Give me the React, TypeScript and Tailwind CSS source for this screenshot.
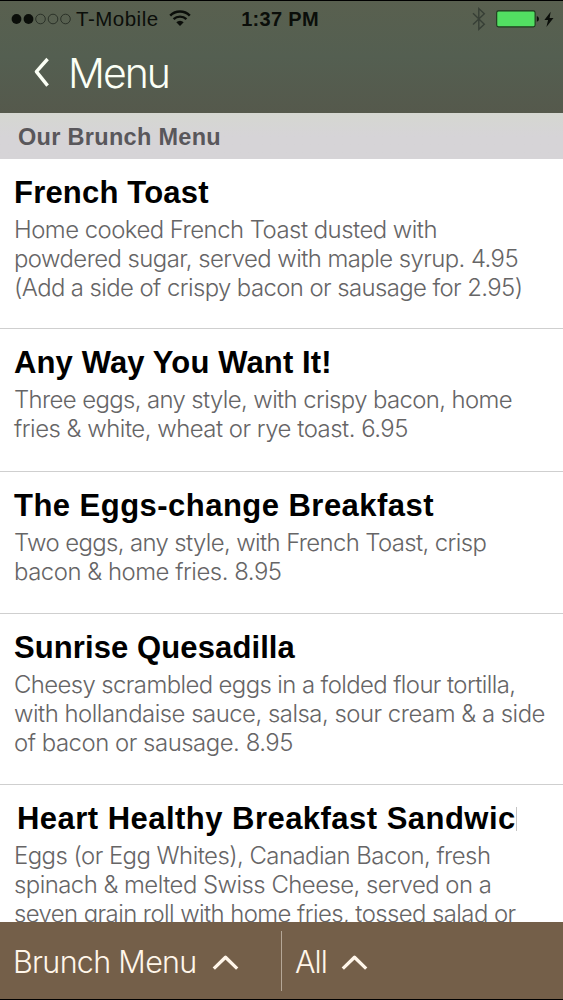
import clsx from "clsx";

type Line = { text: string; tracking: string };
type MenuItem = {
  title: string;
  titleClass: string;
  height: string;
  cut?: boolean;
  lines: Line[];
};

const items: MenuItem[] = [
  {
    title: "French Toast",
    titleClass: "tracking-[0.2px]",
    height: "h-[170px]",
    lines: [
      { text: "Home cooked French Toast dusted with", tracking: "tracking-[-0.51px]" },
      { text: "powdered sugar, served with maple syrup. 4.95", tracking: "tracking-[-0.55px]" },
      { text: "(Add a side of crispy bacon or sausage for 2.95)", tracking: "tracking-[-0.58px]" },
    ],
  },
  {
    title: "Any Way You Want It!",
    titleClass: "tracking-[0.13px]",
    height: "h-[143px]",
    lines: [
      { text: "Three eggs, any style, with crispy bacon, home", tracking: "tracking-[-0.61px]" },
      { text: "fries & white, wheat or rye toast. 6.95", tracking: "tracking-[-0.49px]" },
    ],
  },
  {
    title: "The Eggs-change Breakfast",
    titleClass: "tracking-[0.47px]",
    height: "h-[142px]",
    lines: [
      { text: "Two eggs, any style, with French Toast, crisp", tracking: "tracking-[-0.61px]" },
      { text: "bacon & home fries. 8.95", tracking: "tracking-[-0.47px]" },
    ],
  },
  {
    title: "Sunrise Quesadilla",
    titleClass: "tracking-[0.1px]",
    height: "h-[171px]",
    lines: [
      { text: "Cheesy scrambled eggs in a folded flour tortilla,", tracking: "tracking-[-0.59px]" },
      { text: "with hollandaise sauce, salsa, sour cream & a side", tracking: "tracking-[-0.49px]" },
      { text: "of bacon or sausage. 8.95", tracking: "tracking-[-0.46px]" },
    ],
  },
  {
    title: "Heart Healthy Breakfast Sandwic",
    titleClass: "tracking-[0.47px] pl-[3px]",
    height: "h-[171px]",
    cut: true,
    lines: [
      { text: "Eggs (or Egg Whites), Canadian Bacon, fresh", tracking: "tracking-[-0.52px]" },
      { text: "spinach & melted Swiss Cheese, served on a", tracking: "tracking-[-0.52px]" },
      { text: "seven grain roll with home fries, tossed salad or", tracking: "tracking-[-0.57px]" },
    ],
  },
];

const Signal = () => (
  <svg width="60" height="12" viewBox="0 0 60 12" className="shrink-0">
    {[5.5, 17.5, 29.5, 42, 54.5].map((cx, i) => (
      <circle
        key={cx}
        cx={cx}
        cy="6"
        r={i < 2 ? 4.9 : 4.8}
        fill={i < 2 ? "#0b0e0a" : "none"}
        stroke="#20261e"
        strokeWidth={i < 2 ? 0 : 0.8}
      />
    ))}
  </svg>
);

const Wifi = () => (
  <svg width="22" height="17" viewBox="0 0 22 17" className="shrink-0" fill="none" stroke="#0b0e0a">
    <path d="M1.2 5.6a14 14 0 0 1 19.6 0" strokeWidth="2.5" />
    <path d="M4.6 9.2a9.2 9.2 0 0 1 12.8 0" strokeWidth="2.4" />
    <path d="M7.3 12.3a5.2 5.2 0 0 1 7.4 0L11 16z" fill="#0b0e0a" stroke="none" />
  </svg>
);

const Bluetooth = () => (
  <svg width="14" height="24" viewBox="0 0 14 24" fill="none" stroke="#373f36" strokeWidth="1.4">
    <path d="M1 6.3l11.3 11L6.8 22.3V1.6l5.5 5.1L1 17.4" />
  </svg>
);

const Battery = () => (
  <svg width="44" height="18" viewBox="0 0 44 18">
    <rect x="0.7" y="0.9" width="38.4" height="16" rx="1.8" fill="#52df62" stroke="#1d3a1c" strokeWidth="1.1" />
    <path d="M40.8 6.3c1.5.3 2.1 1.4 2.1 2.7s-.6 2.4-2.1 2.7z" fill="#0b0e0a" />
  </svg>
);

const Bolt = () => (
  <svg width="10" height="17" viewBox="0 0 10 17" fill="#0b0e0a">
    <path d="M6.7.8L.4 9h3.7L2.4 16 9.5 7.1H5.6z" />
  </svg>
);

const CaretUp = () => (
  <svg width="27" height="17" viewBox="0 0 27 17" fill="none" stroke="#fff6ea" strokeWidth="3.3">
    <path d="M1.8 14.6L13.5 3.2l11.7 11.4" strokeLinejoin="round" />
  </svg>
);

const StatusBar = () => (
  <div className="grid h-[37px] grid-cols-[1fr_auto_1fr] items-center border-t border-black pl-[11px] text-[#0b0e0a]">
    <div className="flex items-center">
      <Signal />
      <span className="ml-[5px] text-[20.5px] leading-none tracking-[0.5px]">T-Mobile</span>
      <span className="ml-[10px] -mt-0.5">
        <Wifi />
      </span>
    </div>
    <span className="-ml-3.5 text-[20px] leading-none font-bold tracking-[0.3px]">1:37 PM</span>
    <div className="flex items-center justify-end pr-[9px]">
      <Bluetooth />
      <span className="ml-[10px]">
        <Battery />
      </span>
      <span className="ml-[4px]">
        <Bolt />
      </span>
    </div>
  </div>
);

const Item = ({ item }: { item: MenuItem }) => (
  <li className={clsx("shrink-0 border-b border-[#cfcfcf] px-3.5 pt-4 whitespace-nowrap", item.height)}>
    <div className="flex items-center">
      <h2 className={clsx("text-[31px] leading-9 font-bold text-black", item.titleClass)}>{item.title}</h2>
      {item.cut && <span className="h-6 w-px bg-[#c4c4c4]" />}
    </div>
    <div className="mt-[5px] font-[Inter,sans-serif] text-[23.9px] leading-[28.75px] font-light text-[#666566]">
      {item.lines.map((line) => (
        <p key={line.text} className={line.tracking}>
          {line.text}
        </p>
      ))}
    </div>
  </li>
);

export default function App() {
  return (
    <div className="flex h-[1000px] w-[563px] flex-col overflow-hidden bg-white font-['Liberation_Sans',Arial,sans-serif]">
      <header className="h-[113px] shrink-0 bg-linear-to-b from-[#59604f] via-[#545f51] to-[#55594c]">
        <StatusBar />
        <div className="flex h-[72px] items-center pl-[33px]">
          <svg width="17" height="32" viewBox="0 0 17 32" fill="none" stroke="#fbfff5" strokeWidth="3.4">
            <path d="M14.6 2L3.4 14.6 14.6 28.6" strokeLinejoin="round" />
          </svg>
          <h1 className="ml-[18px] font-[Inter,sans-serif] text-[41px] leading-none font-light tracking-[-2px] text-[#fbfff5]">
            Menu
          </h1>
        </div>
      </header>
      <div className="flex h-[46px] shrink-0 items-center bg-linear-to-b from-[#d5d7d1] via-[#d6d4d7] to-[#d6d4d7] pt-[4px] pl-[18px]">
        <span className="text-[23.5px] leading-none font-bold tracking-[0.3px] text-[#59575b]">Our Brunch Menu</span>
      </div>
      <ul className="flex min-h-0 flex-1 flex-col overflow-hidden">
        {items.map((item) => (
          <Item key={item.title} item={item} />
        ))}
      </ul>
      <footer className="flex h-[78px] shrink-0 items-center border-b border-black bg-[#745f49] font-[Inter,sans-serif] text-[30.5px] leading-none font-light text-[#fff6ea]">
        <button className="flex h-full w-[281px] items-center pt-1 pl-[13px]">
          <span className="tracking-[-0.7px]">Brunch Menu</span>
          <span className="ml-[15px]">
            <CaretUp />
          </span>
        </button>
        <div className="h-[60px] w-px bg-[#b5a797]" />
        <button className="flex h-full items-center pt-1 pl-[13px]">
          <span className="tracking-[-1px]">All</span>
          <span className="ml-[14px]">
            <CaretUp />
          </span>
        </button>
      </footer>
    </div>
  );
}
